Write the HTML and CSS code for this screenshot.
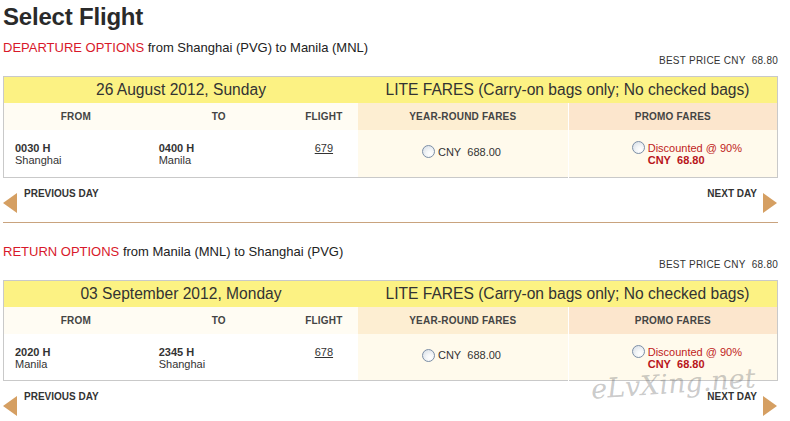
FILE: index.html
```html
<!DOCTYPE html>
<html lang="en">
<head>
<meta charset="UTF-8">
<title>Select Flight</title>
<link rel="stylesheet" href="styles.css">
</head>
<body>
    <div class="page">
        <h1 class="page-title">Select Flight</h1>

        <!-- departure -->
        <div class="leg">
            <div class="leg-title"><span class="leg-name">DEPARTURE OPTIONS</span> from Shanghai (PVG) to Manila (MNL)</div>
            <div class="best-price">BEST PRICE CNY&nbsp;&nbsp;68.80</div>
            <table class="fares">
                <colgroup>
                    <col class="c-from"><col class="c-to"><col class="c-flight"><col class="c-year"><col class="c-promo">
                </colgroup>
                <tr class="row-date">
                    <td colspan="3">26 August 2012, Sunday</td>
                    <td colspan="2">LITE FARES (Carry-on bags only; No checked bags)</td>
                </tr>
                <tr class="row-head">
                    <th>FROM</th>
                    <th>TO</th>
                    <th>FLIGHT</th>
                    <th class="fare-year">YEAR-ROUND FARES</th>
                    <th class="fare-promo">PROMO FARES</th>
                </tr>
                <tr class="row-flight">
                    <td class="place"><b>0030 H</b><br>Shanghai</td>
                    <td class="place"><b>0400 H</b><br>Manila</td>
                    <td class="flight-no"><a href="#">679</a></td>
                    <td class="fare-year">
                        <div class="fare-pick single"><span class="radio"></span><span>CNY&nbsp;&nbsp;688.00</span></div>
                    </td>
                    <td class="fare-promo">
                        <div class="fare-pick promo"><span class="radio"></span><span>Discounted @ 90%<br><b>CNY&nbsp;&nbsp;68.80</b></span></div>
                    </td>
                </tr>
            </table>
            <div class="day-nav">
                <div class="day-link"><span class="arrow-left"></span><span>PREVIOUS DAY</span></div>
                <div class="day-link"><span>NEXT DAY</span><span class="arrow-right"></span></div>
            </div>
            <div class="leg-divider"></div>
        </div>

        <!-- return -->
        <div class="leg">
            <div class="leg-title"><span class="leg-name">RETURN OPTIONS</span> from Manila (MNL) to Shanghai (PVG)</div>
            <div class="best-price">BEST PRICE CNY&nbsp;&nbsp;68.80</div>
            <table class="fares">
                <colgroup>
                    <col class="c-from"><col class="c-to"><col class="c-flight"><col class="c-year"><col class="c-promo">
                </colgroup>
                <tr class="row-date">
                    <td colspan="3">03 September 2012, Monday</td>
                    <td colspan="2">LITE FARES (Carry-on bags only; No checked bags)</td>
                </tr>
                <tr class="row-head">
                    <th>FROM</th>
                    <th>TO</th>
                    <th>FLIGHT</th>
                    <th class="fare-year">YEAR-ROUND FARES</th>
                    <th class="fare-promo">PROMO FARES</th>
                </tr>
                <tr class="row-flight">
                    <td class="place"><b>2020 H</b><br>Manila</td>
                    <td class="place"><b>2345 H</b><br>Shanghai</td>
                    <td class="flight-no"><a href="#">678</a></td>
                    <td class="fare-year">
                        <div class="fare-pick single"><span class="radio"></span><span>CNY&nbsp;&nbsp;688.00</span></div>
                    </td>
                    <td class="fare-promo">
                        <div class="fare-pick promo"><span class="radio"></span><span>Discounted @ 90%<br><b>CNY&nbsp;&nbsp;68.80</b></span></div>
                    </td>
                </tr>
            </table>
            <div class="day-nav">
                <div class="day-link"><span class="arrow-left"></span><span>PREVIOUS DAY</span></div>
                <div class="day-link"><span>NEXT DAY</span><span class="arrow-right"></span></div>
            </div>
        </div>

        <div class="watermark">eLvXing.net</div>
    </div>
</body>
</html>
```

FILE: styles.css
```css
body {
    margin: 0;
    background-color: #fff;
    font-family: "Liberation Sans", Arial, sans-serif;
    color: #333;
}
.page {
    position: relative;
    width: 775px;
    margin-left: 3px;
}
.page-title {
    margin: 2px 0 0 0;
    font-size: 24px;
    line-height: 30px;
    font-weight: bold;
    color: #2a2a2a;
    letter-spacing: -0.2px;
}
.leg-title {
    font-size: 13px;
    line-height: 14px;
    color: #222;
}
.page-title + .leg .leg-title {
    margin-top: 9px;
}
.leg-name {
    color: #d8182a;
}
.best-price {
    font-size: 10px;
    line-height: 12px;
    letter-spacing: 0.25px;
    text-align: right;
    color: #333;
    margin-bottom: 9px;
}
.fares {
    width: 775px;
    border-collapse: collapse;
    border: 1px solid #c9c9c9;
    table-layout: fixed;
}
.c-from { width: 144px; }
.c-to { width: 142px; }
.c-flight { width: 68px; }
.c-year { width: 210px; }
.c-promo { width: 209px; }
.fares td, .fares th {
    padding: 0;
}
.row-date td {
    height: 26px;
    background-color: #fcf283;
    font-size: 15.6px;
    text-align: center;
    color: #333;
}
.row-head th {
    height: 27px;
    background-color: #fffcf3;
    font-size: 10px;
    font-weight: bold;
    letter-spacing: 0.2px;
    color: #444;
}
.row-head th.fare-year {
    background-color: #fdeed2;
}
.row-head th.fare-promo {
    background-color: #fce6cd;
    border-left: 1px solid #fff;
}
.row-flight td {
    height: 47px;
    vertical-align: top;
    font-size: 11px;
    line-height: 12px;
    padding-top: 12px;
    box-sizing: border-box;
}
.place {
    padding-left: 11px !important;
}
.place b {
    color: #333;
}
.flight-no {
    text-align: center;
}
.flight-no a {
    color: #333;
}
.row-flight td.fare-year {
    background-color: #fffaec;
    padding-top: 15px;
    padding-left: 64px;
}
.row-flight td.fare-promo {
    background-color: #fffaec;
    border-left: 1px solid #fff;
    padding-left: 63px;
}
.fare-pick {
    display: flex;
    align-items: flex-start;
}
.fare-pick.single {
    align-items: center;
}
.fare-pick.promo {
    color: #c01c22;
}
.fare-pick.promo b {
    color: #b8141a;
}
.radio {
    display: inline-block;
    width: 11px;
    height: 11px;
    margin-right: 3px;
    border: 1px solid #7d8fa6;
    border-radius: 50%;
    background: radial-gradient(circle at 65% 70%, #fff 0, #f4f6f8 35%, #d3dbe4 100%);
    flex-shrink: 0;
}
.fare-pick.promo .radio {
    margin-top: -1px;
}
.day-nav {
    display: flex;
    justify-content: space-between;
    padding: 10px 0 9px 0;
    height: 25px;
}
.day-link {
    display: flex;
    align-items: flex-start;
    gap: 6px;
    font-size: 10px;
    line-height: 12px;
    font-weight: bold;
    color: #333;
}
.day-link:first-child {
    gap: 7px;
}
.arrow-left, .arrow-right {
    margin-top: 5px;
    width: 0;
    height: 0;
    border-top: 10px solid transparent;
    border-bottom: 10px solid transparent;
}
.arrow-left {
    border-right: 14px solid #d59f62;
}
.arrow-right {
    border-left: 14px solid #d59f62;
    margin-right: 1px;
}
.leg-divider {
    height: 1px;
    background-color: #c9a37e;
    margin-bottom: 22px;
}
.watermark {
    position: absolute;
    left: 588px;
    top: 366px;
    font-family: "DejaVu Serif", serif;
    font-style: italic;
    font-size: 27px;
    color: rgba(120, 120, 120, 0.4);
    transform: rotate(-4deg);
    pointer-events: none;
}
```
